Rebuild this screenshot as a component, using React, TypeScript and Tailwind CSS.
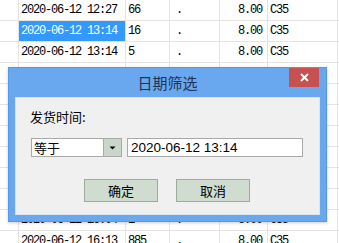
const rows = [
  { t: "2020-06-12 12:27", q: "66" },
  { t: "2020-06-12 13:14", q: "16", sel: true },
  { t: "2020-06-12 13:14", q: "5" },
  { t: "2020-06-12 13:20", q: "12" },
  { t: "2020-06-12 13:41", q: "30" },
  { t: "2020-06-12 14:02", q: "8" },
  { t: "2020-06-12 14:15", q: "21" },
  { t: "2020-06-12 14:48", q: "3" },
  { t: "2020-06-12 15:10", q: "40" },
  { t: "2020-06-12 15:36", q: "9" },
  { t: "2020-06-12 16:04", q: "1" },
  { t: "2020-06-12 16:13", q: "885" },
];

const mono = "font-['Liberation_Mono',monospace] text-[12px] tracking-[-1.2px]";
const cjk = "font-['Noto_Sans_CJK_SC',sans-serif]";

function Grid() {
  return (
    <div className="flex flex-col">
      {rows.map((r, i) => (
        <div
          key={i}
          className={`flex h-[21px] shrink-0 border-b border-[#e4e4e4] text-black ${mono}`}
        >
          <div className="w-[19px] shrink-0 border-r border-[#e4e4e4]" />
          <div
            className={`flex w-[107px] shrink-0 items-center border-r border-[#e4e4e4] pl-[2px] ${
              r.sel ? "bg-[#3399ff] text-white" : ""
            }`}
          >
            {r.t}
          </div>
          <div className="flex w-[44px] shrink-0 items-center border-r border-[#e4e4e4] pl-[2px]">
            {r.q}
          </div>
          <div className="flex w-[50px] shrink-0 items-center border-r border-[#e4e4e4] pl-[6px]">
            .
          </div>
          <div className="flex w-[48px] shrink-0 items-center justify-end border-r border-[#e4e4e4] pr-[5px]">
            8.00
          </div>
          <div className="flex w-[70px] shrink-0 items-center border-r border-[#e4e4e4] pl-[2px]">
            C35
          </div>
        </div>
      ))}
    </div>
  );
}

function DateFilterDialog() {
  return (
    <div className="absolute left-[8px] top-[67px] flex h-[155px] w-[319px] flex-col border border-[#5a97e0] bg-[#69a7ee] shadow-[0_1px_3px_rgba(0,0,0,0.2)]">
      <div className="relative flex h-[29px] shrink-0 items-center justify-center">
        <span className={`${cjk} text-[15px] leading-none text-[#1f3350]`}>日期筛选</span>
        <button className="absolute right-[7px] top-0 flex h-[19px] w-[30px] items-center justify-center bg-[#c75050]">
          <svg width="9" height="9" viewBox="0 0 9 9">
            <path d="M1 1L8 8M8 1L1 8" stroke="white" strokeWidth="1.8" />
          </svg>
        </button>
      </div>
      <div className="mx-[6px] mb-[6px] flex flex-1 flex-col border border-[#d8e4f2] bg-[#f0f0f0] pl-[14px]">
        <div className={`${cjk} mt-[11px] h-[16px] text-[13px] leading-[16px] text-black`}>
          发货时间:
        </div>
        <div className="mt-[13px] flex h-[19px] items-stretch">
          <div className="ml-px flex w-[91px] border border-[#a9a9a9] bg-white">
            <span className={`${cjk} flex flex-1 items-center pl-[2px] text-[13px] leading-none text-black`}>
              等于
            </span>
            <div className="flex w-[18px] items-center justify-center border-l border-[#a9a9a9] bg-[#c9d6c9]">
              <svg width="7" height="4" viewBox="0 0 7 4">
                <path d="M0.5 0.5H6.5L3.5 3.5Z" fill="black" />
              </svg>
            </div>
          </div>
          <div className="ml-[5px] flex w-[176px] items-center border border-[#a9a9a9] bg-white pl-[3px] font-['Liberation_Sans',sans-serif] text-[13.5px] leading-none text-black">
            2020-06-12 13:14
          </div>
        </div>
        <div className="mt-[22px] flex gap-[18px] pl-[54px]">
          <button className={`${cjk} flex h-[23px] w-[74px] items-center justify-center border border-[#9daa9d] bg-[#cfdccf] text-[13px] leading-none text-black`}>
            确定
          </button>
          <button className={`${cjk} flex h-[23px] w-[74px] items-center justify-center border border-[#9daa9d] bg-[#cfdccf] text-[13px] leading-none text-black`}>
            取消
          </button>
        </div>
      </div>
    </div>
  );
}

export default function App() {
  return (
    <div className="relative h-[243px] w-[339px] overflow-hidden bg-white">
      <Grid />
      <DateFilterDialog />
    </div>
  );
}
